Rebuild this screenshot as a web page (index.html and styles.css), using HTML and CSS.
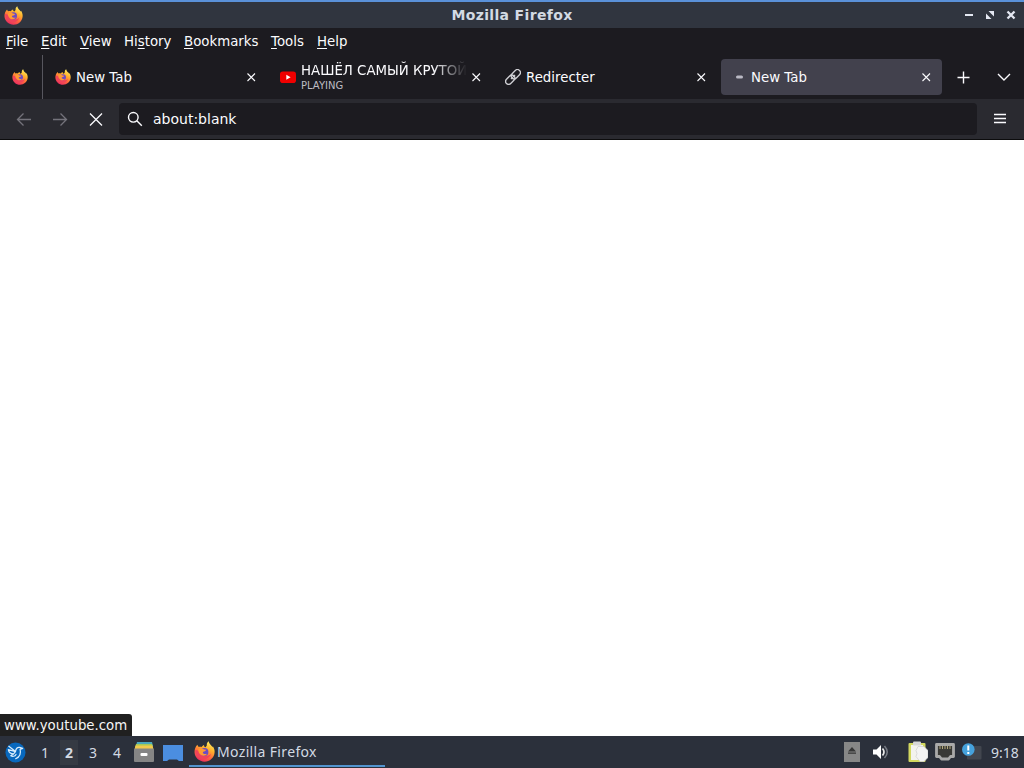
FILE: index.html
```html
<!DOCTYPE html>
<html lang="en">
<head>
    <meta charset="UTF-8">
    <title>Mozilla Firefox</title>
    <link rel="stylesheet" href="styles.css">
</head>
<body>
    <svg class="defs" width="0" height="0">
        <defs>
            <linearGradient id="flame" x1="0.8" y1="0" x2="0.3" y2="1">
                <stop offset="0" stop-color="#fff36a"/>
                <stop offset="0.35" stop-color="#ffb32c"/>
                <stop offset="0.65" stop-color="#ff6a3c"/>
                <stop offset="1" stop-color="#e92863"/>
            </linearGradient>
            <symbol id="firefox" viewBox="0 0 20 20">
                <path fill="url(#flame)" d="M3.2 3.6c.3 1 .8 1.6 1.4 2 .8-.3 1.8-.3 2.6 0C8 4.500 8.700 4 9.600 3.700 9.400 4.800 10 5.500 11 5.900l1.200-1.600C12 2.500 12.700 1 14 .3c.3 2 1.500 3 2.600 4.200.5.500.8 1 1 1.400l.4-1C19.300 7 19.800 9 19.600 11c-.4 5-4.600 8.700-9.600 8.700S.7 15.800.5 10.800C.4 8 1.400 5.500 3.200 3.600z"/>
                <path fill="#f0435a" d="M1.200 8.500c0 4 2 7 5.300 8.200 4.500 1.600 8.600-.5 9.700-4.500-1.600 2-4.200 2.400-6.200 1.600L5.500 9.500z"/>
                <circle cx="10" cy="10.400" r="3.700" fill="#6c4bc4"/>
                <path fill="#ff9b32" d="M4 8.200c1.800-1.400 4-1.200 5.600-.2l2 .4c-.2 1.100-1.600 1.500-2.800 1.800-.5.400-.5 1.200.1 1.700 1 .8 2.300.4 3.500.2-1 1.900-3.700 2.400-5.700 1.200C5 12.300 4 10.400 4 8.200z"/>
            </symbol>
            <symbol id="close" viewBox="0 0 10 10">
                <path d="M1.500 1.500l7.500 7.500M9 1.500L1.500 9" fill="none" stroke="currentColor" stroke-width="1.100"/>
            </symbol>
        </defs>
    </svg>

    <header class="titlebar">
        <svg class="title-icon"><use href="#firefox"/></svg>
        <span class="title">Mozilla Firefox</span>
        <svg class="window-buttons" viewBox="0 0 54 14">
            <path d="M2 7h8" stroke="#e4e8f2" stroke-width="2"/>
            <path d="M25.500 3H31v5.500zM23 5.500V11h5.500z" fill="#e4e8f2"/>
            <path d="M44.500 3.500l7 7M51.500 3.500l-7 7" stroke="#e4e8f2" stroke-width="2.300"/>
        </svg>
    </header>

    <nav class="menubar">
        <span class="m-file"><u>F</u>ile</span>
        <span class="m-edit"><u>E</u>dit</span>
        <span class="m-view"><u>V</u>iew</span>
        <span class="m-history">Hi<u>s</u>tory</span>
        <span class="m-bookmarks"><u>B</u>ookmarks</span>
        <span class="m-tools"><u>T</u>ools</span>
        <span><u>H</u>elp</span>
    </nav>

    <div class="tabs">
        <div class="pinned"><svg class="favicon"><use href="#firefox"/></svg></div>
        <div class="tab">
            <svg class="favicon"><use href="#firefox"/></svg>
            <span class="tab-label">New Tab</span>
            <svg class="tab-close"><use href="#close"/></svg>
        </div>
        <div class="tab">
            <svg class="favicon" viewBox="0 0 16 16">
                <rect x="0" y="2.500" width="16" height="11.500" rx="2.800" fill="#f00000"/>
                <path d="M6.300 5.800v5l4.300-2.500z" fill="#fff"/>
            </svg>
            <div class="tab-label playing">
                <div class="tab-title">НАШЁЛ САМЫЙ КРУТОЙ</div>
                <div class="tab-status">PLAYING</div>
            </div>
            <svg class="tab-close"><use href="#close"/></svg>
        </div>
        <div class="tab">
            <svg class="favicon" viewBox="0 0 16 16">
                <g fill="none" stroke="#d0d0d4" stroke-width="1.300" transform="rotate(-45 8 8)">
                    <rect x="-1.200" y="5" width="10.500" height="6" rx="3"/>
                    <rect x="6.700" y="5" width="10.500" height="6" rx="3"/>
                    <path d="M5 8h6"/>
                </g>
            </svg>
            <span class="tab-label">Redirecter</span>
            <svg class="tab-close"><use href="#close"/></svg>
        </div>
        <div class="tab active">
            <svg class="favicon" viewBox="0 0 16 16"><rect x="6" y="6.500" width="7" height="3" rx="1.500" fill="#bab9c4"/></svg>
            <span class="tab-label">New Tab</span>
            <svg class="tab-close"><use href="#close"/></svg>
        </div>
        <svg class="new-tab" viewBox="0 0 14 14"><path d="M6.500 1.500v12M.5 7.500h12" stroke="#fbfbfe" stroke-width="1.400"/></svg>
        <svg class="all-tabs" viewBox="0 0 14 14"><path d="M1 4l6 6 6-6" fill="none" stroke="#fbfbfe" stroke-width="1.400"/></svg>
    </div>

    <div class="toolbar">
        <svg class="nav-icon dim" viewBox="0 0 16 16"><path d="M15 8.500H1.500M7.500 2.500l-6 6 6 6"/></svg>
        <svg class="nav-icon dim" viewBox="0 0 16 16"><path d="M1 8.500h13.500M8.500 2.500l6 6-6 6"/></svg>
        <svg class="nav-icon" viewBox="0 0 16 16"><path d="M2 2.500l12 12M14 2.500l-12 12"/></svg>
        <div class="urlbar">
            <svg class="search" viewBox="0 0 16 16"><circle cx="6.300" cy="6.300" r="4.800"/><path d="M9.800 9.800l5 5"/></svg>
            <span>about:blank</span>
        </div>
        <svg class="app-menu" viewBox="0 0 12 12"><path d="M0 1.500h12M0 5.500h12M0 9.500h12" stroke="#fbfbfe" stroke-width="1.300"/></svg>
    </div>

    <main class="page">
        <div class="status">www.youtube.com</div>
    </main>

    <footer class="taskbar">
        <svg class="start" viewBox="0 0 22 22">
            <circle cx="11" cy="11" r="10.500" fill="#0868bd"/>
            <path d="M4 4.500l7 5.500c.3-3 2-4.800 4.300-4.300l3.200 1-2.700 1c1.200 4.300-.3 7.800-4.600 9.800M11 10l-7.500-2c.5 3 2.500 4.500 5.500 4.500l2-2.500M9 12.500l-3 2c2 1.200 4.500.5 5.500-1.500" fill="none" stroke="#d9edfc" stroke-width="1.300" stroke-linecap="round" stroke-linejoin="round"/>
        </svg>
        <div class="desktops">
            <span>1</span>
            <span class="current">2</span>
            <span>3</span>
            <span>4</span>
        </div>
        <svg class="files" viewBox="0 0 20 22">
            <path d="M3 1h15l1 4H2z" fill="#4aa7bb"/>
            <path d="M2 3h16l1 4H1z" fill="#a7c957"/>
            <path d="M1.500 4.500h17l1 4H.5z" fill="#f2c94c"/>
            <rect y="7.500" width="20" height="13.500" rx="1" fill="#858585"/>
            <rect x="6.500" y="12" width="7" height="3" rx="1" fill="#fff"/>
        </svg>
        <svg class="show-desktop" viewBox="0 0 20 17">
            <path d="M0 0h20v16h-4l-2-1.500H6L4 16H0z" fill="#4b8ee0"/>
        </svg>
        <div class="task">
            <svg><use href="#firefox"/></svg>
            <span>Mozilla Firefox</span>
        </div>
        <div class="tray">
            <svg class="eject" viewBox="0 0 16 20">
                <rect width="16" height="20" fill="#878787"/>
                <path d="M8 5l4 4.500H4zM4 10.500h8v1.200H4z" fill="#363636"/>
            </svg>
            <svg class="volume" viewBox="0 0 18 16">
                <path d="M1 5.500h3.500L9 1v14l-4.500-4.500H1z" fill="#fff"/>
                <path d="M10.500 4.500q3 3.500 0 7" fill="none" stroke="#e8e8e8" stroke-width="1.700"/>
                <path d="M12.500 2q5.500 6 0 12" fill="none" stroke="#777b84" stroke-width="1.500"/>
            </svg>
            <svg class="clipboard" viewBox="0 0 20 22">
                <rect x=".5" y="2" width="17" height="19" rx="1" fill="#d3d860"/>
                <path d="M3 4h12v15H3z" fill="#f3f3ee"/>
                <rect x="5" y=".5" width="8" height="4" rx="1" fill="#d7d7d7"/>
                <path d="M10 5.500h6l4 4v7l-4 4h-4l-4-5 1-3-1-3z" fill="#f4f4f4" stroke="#c9c9c9" stroke-width=".6"/>
            </svg>
            <svg class="network" viewBox="0 0 20 18">
                <path d="M1.500 1.500h17v12h-3l-2 2.500h-7l-2-2.500h-3z" fill="#393936" stroke="#a9a9a9" stroke-width="2.800" stroke-linejoin="round"/>
                <path d="M5 3v3M7.500 3v3M10 3v3M12.500 3v3M15 3v3" stroke="#b2a77a"/>
            </svg>
            <svg class="notice" viewBox="0 0 20 18">
                <rect x="5" y="3" width="14.500" height="13.500" rx="1" fill="#42464f"/>
                <circle cx="6.300" cy="6.500" r="6.300" fill="#45a1dc"/>
                <path d="M6.300 2.500v5M6.300 9v2" stroke="#fff" stroke-width="2"/>
            </svg>
            <span class="clock">9:18</span>
        </div>
    </footer>
</body>
</html>
```
FILE: styles.css
```css
body {
    margin: 0;
    width: 1024px;
    height: 768px;
    display: flex;
    flex-direction: column;
    overflow: hidden;
    background: #fff;
    color: #fbfbfe;
    font-family: "DejaVu Sans", sans-serif;
    font-size: 13.33px;
    white-space: nowrap;
}
svg {
    display: block;
    flex: none;
}
.defs {
    position: absolute;
}
.titlebar {
    height: 28px;
    box-sizing: border-box;
    border-top: 2px solid #5a91d9;
    background: #30353f;
    display: grid;
    grid-template-columns: 62px 1fr 62px;
    align-items: center;
}
.title-icon {
    width: 19px;
    height: 19px;
    margin-left: 4px;
}
.title {
    text-align: center;
    font-size: 14px;
    font-weight: bold;
    letter-spacing: 0.35px;
    color: #d3dae3;
}
.window-buttons {
    width: 54px;
    height: 14px;
    margin-left: 1px;
}
.menubar {
    height: 27px;
    padding-left: 6px;
    background: #1c1b20;
    display: flex;
    align-items: center;
}
.menubar u {
    text-underline-offset: 2px;
    text-decoration-thickness: 1px;
}
.m-file { width: 35px; }
.m-edit { width: 39px; }
.m-view { width: 44px; }
.m-history { width: 60px; }
.m-bookmarks { width: 87px; }
.m-tools { width: 46px; }
.tabs {
    height: 44px;
    background: #1c1b20;
    display: flex;
    align-items: center;
}
.pinned {
    width: 40px;
    height: 44px;
    padding-right: 2px;
    border-right: 1px solid #57565e;
    margin-right: 3px;
    display: flex;
    align-items: center;
    justify-content: center;
}
.favicon {
    width: 16px;
    height: 16px;
}
.tab {
    width: 221px;
    height: 36px;
    box-sizing: border-box;
    margin-right: 4px;
    padding: 0 11px 0 9px;
    border-radius: 4px;
    display: flex;
    align-items: center;
}
.tab.active {
    background: #42414d;
}
.tab-label {
    flex: 1;
    min-width: 0;
    margin-left: 5px;
    overflow: hidden;
}
.playing {
    margin-right: 4px;
    margin-top: -3px;
}
.tab-title {
    line-height: 16px;
    padding-top: 3px;
    -webkit-mask-image: linear-gradient(to left, transparent, #000 34px);
    mask-image: linear-gradient(to left, transparent, #000 34px);
}
.tab-status {
    font-size: 10px;
    line-height: 13px;
    color: #bcbbc3;
}
.tab-close {
    width: 10px;
    height: 10px;
}
.new-tab {
    width: 14px;
    height: 14px;
    margin-left: 11px;
}
.all-tabs {
    width: 14px;
    height: 14px;
    margin-left: 26px;
}
.toolbar {
    height: 41px;
    box-sizing: border-box;
    background: #2a2a30;
    border-bottom: 1px solid #0c0c0d;
    display: flex;
    align-items: center;
    padding-left: 16px;
}
.nav-icon {
    width: 16px;
    height: 16px;
    margin-right: 20px;
    fill: none;
    stroke: #fbfbfe;
    stroke-width: 1.3;
}
.dim {
    stroke: #74737b;
}
.urlbar {
    width: 858px;
    height: 32px;
    box-sizing: border-box;
    margin-left: -5px;
    padding-left: 8px;
    border-radius: 4px;
    background: #1c1b20;
    display: flex;
    align-items: center;
    gap: 10px;
    font-size: 14px;
}
.search {
    width: 16px;
    height: 16px;
    fill: none;
    stroke: #fbfbfe;
    stroke-width: 1.4;
}
.app-menu {
    width: 12px;
    height: 12px;
    margin-left: 17px;
}
.page {
    flex: 1;
    background: #fff;
    display: flex;
    align-items: flex-end;
}
.status {
    width: 132px;
    height: 22px;
    box-sizing: border-box;
    padding-left: 4px;
    border-radius: 0 3px 0 0;
    background: #202020;
    line-height: 24px;
    color: #f5f5f5;
}
.taskbar {
    height: 32px;
    background: #2b303b;
    display: flex;
    align-items: center;
    font-family: "Noto Sans", sans-serif;
    font-size: 14px;
    color: #d3dae3;
}
.start {
    width: 21px;
    height: 21px;
    margin-left: 5px;
}
.desktops {
    display: flex;
    margin: 0 8px 0 10px;
    gap: 6px;
}
.desktops span {
    width: 18px;
    height: 25px;
    line-height: 25px;
    text-align: center;
}
.desktops .current {
    background: #353a43;
    font-weight: bold;
}
.files {
    width: 20px;
    height: 22px;
}
.show-desktop {
    width: 20px;
    height: 17px;
    margin-left: 9px;
    margin-top: 2px;
}
.task {
    width: 196px;
    height: 30px;
    box-sizing: border-box;
    margin-left: 6px;
    padding-left: 5px;
    border-bottom: 2px solid #5294cf;
    display: flex;
    align-items: center;
    gap: 2px;
    letter-spacing: 0.35px;
}
.task svg {
    width: 21px;
    height: 21px;
}
.tray {
    flex: 1;
    display: flex;
    align-items: center;
    justify-content: flex-end;
    padding-right: 4px;
}
.eject {
    width: 16px;
    height: 20px;
}
.volume {
    width: 18px;
    height: 16px;
    margin-left: 12px;
}
.clipboard {
    width: 20px;
    height: 22px;
    margin-left: 18px;
}
.network {
    width: 20px;
    height: 18px;
    margin-left: 7px;
}
.notice {
    width: 20px;
    height: 18px;
    margin-left: 7px;
}
.clock {
    width: 29px;
    margin-left: 9px;
}
```
